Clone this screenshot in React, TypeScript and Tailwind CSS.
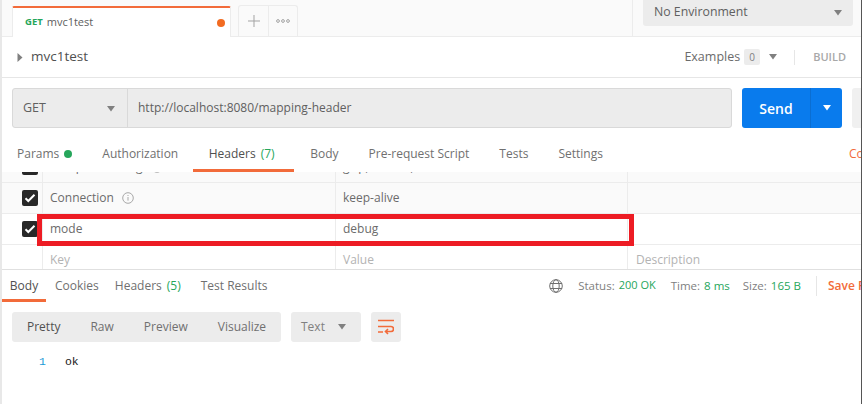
import React from "react";

const Caret = ({ className = "" }: { className?: string }) => (
  <svg width="10" height="6" viewBox="0 0 10 6" className={className}><path d="M1 0h8L5 5.5z" fill="currentColor" /></svg>
);

const Check = () => (
  <div className="w-4 h-4 rounded-[2px] bg-[#282828] flex items-center justify-center shrink-0">
    <svg width="12" height="10" viewBox="0 0 12 10"><path d="M1.500 5.200 4.300 8 10.500 1.800" fill="none" stroke="#fff" strokeWidth="2" /></svg>
  </div>
);

const Info = () => (
  <svg width="12" height="12" viewBox="0 0 12 12" className="ml-2 text-[#a8a8a8]">
    <circle cx="6" cy="6" r="5.300" fill="none" stroke="currentColor" strokeWidth="1" />
    <path d="M6 5v3.600M6 3v1" stroke="currentColor" strokeWidth="1" />
  </svg>
);

function Row({ k, v, desc, info, checked = true, ph = false, white = false, cls = "h-[31px]", inner = "items-center" }: { k?: string; v?: string; desc?: string; info?: boolean; checked?: boolean; ph?: boolean; white?: boolean; cls?: string; inner?: string }) {
  const text = ph ? "text-[#b3b3b3]" : "text-[#6b6b6b]";
  return (
    <div className={`flex shrink-0 border-b border-[#ececec] text-[12px] ${cls} ${white ? "bg-white" : "bg-[#fafafa]"}`}>
      <div className="w-[41px] flex items-center justify-end pr-[4px] border-r border-[#ececec] shrink-0">{checked && <Check />}</div>
      <div className={`w-[293px] pl-[7px] flex border-r border-[#ececec] shrink-0 ${inner} ${text}`}>{k}{info && <Info />}</div>
      <div className={`w-[292px] pl-[7px] flex border-r border-[#ececec] shrink-0 ${inner} ${text}`}>{v}</div>
      <div className={`flex-1 pl-[8px] flex ${inner} ${text}`}>{desc}</div>
    </div>
  );
}

export default function App() {
  return (
    <div className="w-[862px] h-[404px] bg-white overflow-hidden relative flex flex-col border-l-2 border-r border-l-[#e8e8e8] border-r-[#555] text-[#6b6b6b] [font-family:'Open_Sans',sans-serif] text-[12px]">
      {/* Tab strip */}
      <div className="h-[37px] shrink-0 bg-[#fafafa] border-b border-[#ececec] flex items-end">
        <div className="ml-[10px] w-[219px] h-[31px] -mb-px bg-white border-t-2 border-x border-t-[#f26b3a] border-x-[#ececec] rounded-t-[2px] flex items-center pl-[12px] pr-[4px]">
          <span className="text-[9.500px] font-bold text-[#26a65b] mr-[4px]">GET</span>
          <span className="text-[11px] text-[#606060]">mvc1test</span>
          <span className="ml-auto w-2 h-2 rounded-full bg-[#f26b21] mr-[1px]"></span>
        </div>
        <div className="ml-[7px] h-[31px] flex border-t border-x border-[#ececec] rounded-t-[3px]">
          <div className="w-[30px] flex items-center justify-center border-r border-[#ececec]">
            <svg width="12" height="12" viewBox="0 0 12 12"><path d="M6 0v12M0 6h12" stroke="#a3a3a3" strokeWidth="1" /></svg>
          </div>
          <div className="w-[28px] flex items-center justify-center">
            <svg width="14" height="4" viewBox="0 0 14 4" fill="none" stroke="#8f8f8f" strokeWidth="0.8"><circle cx="2" cy="2" r="1.400" /><circle cx="7" cy="2" r="1.400" /><circle cx="12" cy="2" r="1.400" /></svg>
          </div>
        </div>
        <div className="ml-auto h-[36px] w-[229px] border-l border-[#ececec] flex items-start self-start pl-[10px]">
          <div className="w-[210px] h-[26px] bg-[#ececec] rounded-b-[3px] flex items-center pl-[11px] pr-[10px] text-[12.300px] text-[#606060] pb-[1px]">
            No Environment
            <Caret className="ml-auto text-[#808080]" />
          </div>
        </div>
      </div>

      {/* Name row */}
      <div className="h-[41px] shrink-0 border-b border-[#e6e6e6] flex items-center">
        <svg width="6" height="9" viewBox="0 0 6 9" className="ml-[15px] text-[#808080]"><path d="M.5 0v9L5.500 4.500z" fill="currentColor" /></svg>
        <span className="ml-[8px] text-[13.500px] text-[#505050] pb-[1px]">mvc1test</span>
        <div className="ml-auto flex items-center">
          <span className="text-[12.500px] text-[#6b6b6b]">Examples</span>
          <span className="ml-[4px] w-4 h-4 bg-[#ececec] rounded-[2px] flex items-center justify-center text-[10px] text-[#808080]">0</span>
          <Caret className="ml-[8px] text-[#808080]" />
          <div className="ml-[16px] w-px h-[15px] bg-[#e6e6e6]"></div>
          <span className="ml-[18px] mr-[15px] text-[11px] text-[#a8a8a8] font-semibold">BUILD</span>
        </div>
      </div>

      {/* URL row */}
      <div className="h-[60px] shrink-0 flex items-start pt-[10px] pl-[10px]">
        <div className="w-[720px] h-[40px] shrink-0 flex bg-[#ececec] border border-[#d9d9d9] rounded-[3px]">
          <div className="w-[115px] flex items-center pl-[10px] pr-[11px] border-r border-[#d9d9d9] text-[12.500px] text-[#606060] pt-[1px]">
            GET
            <Caret className="ml-auto text-[#808080]" />
          </div>
          <div className="pl-[10px] flex items-center text-[12px] text-[#606060]">http://localhost:8080/mapping-header</div>
        </div>
        <div className="ml-[10px] w-[100px] h-[40px] shrink-0 bg-[#097bed] rounded-[3px] flex text-white">
          <div className="w-[69px] flex items-center justify-center text-[14px] font-semibold border-r border-[#0a6ed2]">Send</div>
          <div className="flex-1 flex items-center justify-center"><Caret /></div>
        </div>
        <div className="ml-[10px] w-[20px] h-[40px] shrink-0 bg-[#f0f0f0] rounded-l-[3px]"></div>
      </div>

      {/* Request tabs */}
      <div className="h-[34px] shrink-0 flex text-[12px] text-[#707070] relative">
        <div className="w-[15px]"></div>
        <div className="flex items-center h-[31px]">Params<span className="ml-[5px] w-2 h-2 rounded-full bg-[#26a65b]"></span></div>
        <div className="ml-[30px] flex items-center h-[31px]">Authorization</div>
        <div className="ml-[15px] w-[101px] h-[34px] border-b-[3px] border-[#f26b3a] flex items-center justify-center text-[#505050] pr-[4px]">Headers<span className="ml-[5px] text-[#26a65b]">(7)</span></div>
        <div className="ml-[16px] flex items-center h-[31px]">Body</div>
        <div className="ml-[30px] flex items-center h-[31px]">Pre-request Script</div>
        <div className="ml-[30px] flex items-center h-[31px]">Tests</div>
        <div className="ml-[30px] flex items-center h-[31px]">Settings</div>
        <div className="ml-auto flex items-center h-[31px] text-[#f26b3a] w-[12px] overflow-hidden whitespace-nowrap">Cookies</div>
      </div>

      {/* Table */}
      <div className="h-[98px] shrink-0 overflow-hidden flex flex-col justify-end border-b border-[#e0e0e0] relative">
        <Row k="Accept-Encoding" v="gzip, deflate, br" info />
        <Row k="Connection" v="keep-alive" info />
        <Row k="mode" v="debug" white />
        <Row k="Key" v="Value" desc="Description" checked={false} ph white cls="h-[24px] !border-b-0" inner="items-end" />
      </div>
      <div className="absolute left-[35px] top-[214px] w-[597px] h-[32px] border-[5px] border-[#ed1c24] pointer-events-none"></div>

      {/* Response tabs */}
      <div className="h-[32px] shrink-0 flex text-[12px] text-[#707070]">
        <div className="w-[44px] h-[32px] border-b-[3px] border-[#f26b3a] flex items-center justify-center text-[#505050] pt-[2px]">Body</div>
        <div className="ml-[9px] flex items-center pb-[1px]">Cookies</div>
        <div className="ml-[16px] flex items-center pb-[1px]">Headers<span className="ml-[5px] text-[#26a65b]">(5)</span></div>
        <div className="ml-[20px] flex items-center pb-[1px]">Test Results</div>
        <div className="ml-auto flex items-center text-[11.500px] pb-[1px]">
          <svg width="14" height="14" viewBox="0 0 14 14" fill="none" stroke="#6f6f6f" strokeWidth="1" className="mr-[15px]"><circle cx="7" cy="7" r="6.300" /><ellipse cx="7" cy="7" rx="3.200" ry="6.300" /><path d="M1 4.500h12M1 9.500h12" /></svg>
          <span className="text-[#808080]">Status:</span><span className="ml-[4px] text-[11px] text-[#26a65b]">200 OK</span>
          <span className="ml-[15px] text-[#808080]">Time:</span><span className="ml-[4px] text-[#26a65b]">8 ms</span>
          <span className="ml-[13px] text-[#808080]">Size:</span><span className="ml-[4px] text-[#26a65b]">165 B</span>
          <div className="ml-[15px] w-px h-[20px] bg-[#e6e6e6]"></div>
          <div className="ml-[11px] w-[33px] overflow-hidden whitespace-nowrap text-[12px] font-semibold text-[#f26b3a]">Save Response</div>
        </div>
      </div>

      {/* Toolbar */}
      <div className="h-[30px] mt-[10px] shrink-0 flex ml-[10px] text-[12px]">
        <div className="w-[269px] bg-[#ececec] rounded-[3px] flex items-center text-[#707070]">
          <span className="ml-[15px] text-[#505050]">Pretty</span>
          <span className="ml-[30px]">Raw</span>
          <span className="ml-[30px]">Preview</span>
          <span className="ml-[30px]">Visualize</span>
        </div>
        <div className="ml-[10px] w-[70px] bg-[#ececec] rounded-[3px] flex items-center pl-[10px] pr-[14px] text-[#808080]">
          Text<Caret className="ml-auto text-[#808080]" />
        </div>
        <div className="ml-[10px] w-[30px] bg-[#ececec] rounded-[3px] flex items-center justify-center">
          <svg width="16" height="16" viewBox="0 0 16 16" fill="none" stroke="#f26b3a" strokeWidth="1.600"><path d="M0 1.500h16M0 7.500h13a2.500 2.500 0 0 1 0 5H8M10 10 7.500 12.500 10 15M0 13h5" /></svg>
        </div>
      </div>

      {/* Body */}
      <div className="mt-[12px] flex items-center h-[16px] [font-family:'Liberation_Mono',monospace] text-[11.500px]">
        <span className="ml-[37px] text-[#1a9ad6]">1</span>
        <span className="ml-[19px] text-[#202020]">ok</span>
      </div>
    </div>
  );
}
